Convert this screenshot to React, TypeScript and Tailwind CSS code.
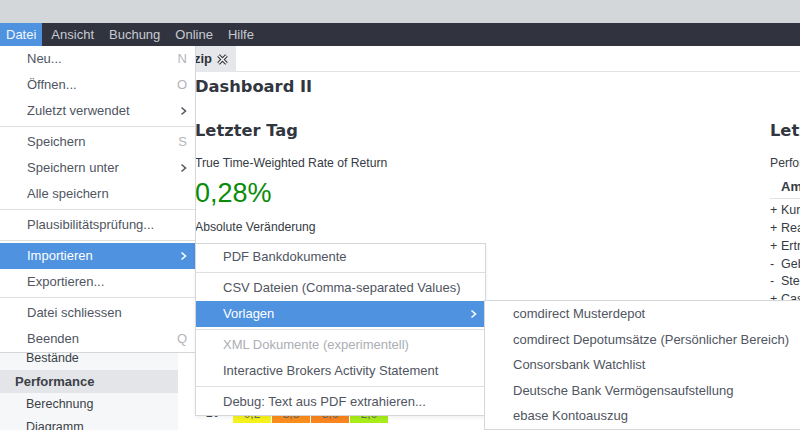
import type { ReactNode } from 'react'

type MenuEntry =
  | { kind: 'sep' }
  | {
      kind: 'item'
      label: string
      shortcut?: string
      sub?: boolean
      active?: boolean
      disabled?: boolean
    }

const sep: MenuEntry = { kind: 'sep' }
const item = (
  label: string,
  extra: Partial<Extract<MenuEntry, { kind: 'item' }>> = {},
): MenuEntry => ({ kind: 'item', label, ...extra })

const FILE_MENU: MenuEntry[] = [
  item('Neu...', { shortcut: 'N' }),
  item('Öffnen...', { shortcut: 'O' }),
  item('Zuletzt verwendet', { sub: true }),
  sep,
  item('Speichern', { shortcut: 'S' }),
  item('Speichern unter', { sub: true }),
  item('Alle speichern'),
  sep,
  item('Plausibilitätsprüfung...'),
  sep,
  item('Importieren', { sub: true, active: true }),
  item('Exportieren...'),
  sep,
  item('Datei schliessen'),
  item('Beenden', { shortcut: 'Q' }),
]

const IMPORT_MENU: MenuEntry[] = [
  item('PDF Bankdokumente'),
  sep,
  item('CSV Dateien (Comma-separated Values)'),
  item('Vorlagen', { sub: true, active: true }),
  sep,
  item('XML Dokumente (experimentell)', { disabled: true }),
  item('Interactive Brokers Activity Statement'),
  sep,
  item('Debug: Text aus PDF extrahieren...'),
]

const TEMPLATES = [
  'comdirect Musterdepot',
  'comdirect Depotumsätze (Persönlicher Bereich)',
  'Consorsbank Watchlist',
  'Deutsche Bank Vermögensaufstellung',
  'ebase Kontoauszug',
]

const TOP_MENU = ['Datei', 'Ansicht', 'Buchung', 'Online', 'Hilfe']

// Sidebar entries above "Bestände" sit under the open menu.
const SIDEBAR: { label: string; group?: boolean; selected?: boolean }[] = [
  { label: 'Wertpapiere', group: true },
  { label: 'Alle Wertpapiere' },
  { label: 'Favoriten' },
  { label: 'Konten', group: true },
  { label: 'Girokonto' },
  { label: 'Tagesgeld' },
  { label: 'Depots', group: true },
  { label: 'Depot' },
  { label: 'Alle Buchungen', group: true },
  { label: 'Berichte', group: true },
  { label: 'Vermögensaufstellung' },
  { label: 'Statement of Assets' },
  { label: 'Zahlungen' },
  { label: 'Bestände' },
  { label: 'Performance', group: true, selected: true },
  { label: 'Berechnung' },
  { label: 'Diagramm' },
]

const CALC_ROWS = [
  ['+', 'Kursgewinne'],
  ['+', 'Realisierte Gewinne'],
  ['+', 'Erträge'],
  ['-', 'Gebühren'],
  ['-', 'Steuern'],
  ['+', 'Cash Währungsgewinne'],
]

const HEAT = [
  { value: '0,2', color: 'bg-[#f5f21c]' },
  { value: '3,5', color: 'bg-[#fb8d1e]' },
  { value: '3,6', color: 'bg-[#fa841e]' },
  { value: '2,0', color: 'bg-[#a8ec1a]' },
]

function Chevron({ light }: { light?: boolean }) {
  return (
    <svg width="7" height="10" viewBox="0 0 7 10" className="shrink-0">
      <polyline
        points="1.5,1.5 5.5,5 1.5,8.5"
        fill="none"
        stroke={light ? '#ffffff' : '#555a63'}
        strokeWidth="1.6"
      />
    </svg>
  )
}

function MenuList({ entries, indent }: { entries: MenuEntry[]; indent: string }): ReactNode {
  return entries.map((entry, index) =>
    entry.kind === 'sep' ? (
      <div key={index} className="py-[2px]">
        <div className="h-px bg-[#dedfe1]" />
      </div>
    ) : (
      <div
        key={index}
        className={`flex h-[26px] items-center justify-between pr-[8px] ${indent} ${
          entry.active
            ? 'bg-[#4f92e0] text-white'
            : entry.disabled
              ? 'text-[#abaeb3]'
              : 'text-[#50555f]'
        }`}
      >
        <span className="whitespace-nowrap">{entry.label}</span>
        {entry.shortcut && <span className="text-[#b3b5b9]">{entry.shortcut}</span>}
        {entry.sub && <Chevron light={entry.active} />}
      </div>
    ),
  )
}

function CloseIcon() {
  return (
    <svg width="11" height="11" viewBox="0 0 11 11" className="shrink-0">
      <path d="M1.5 1.5 L9.5 9.5 M9.5 1.5 L1.5 9.5" stroke="#2e323a" strokeWidth="3.6" />
      <path d="M1.5 1.5 L9.5 9.5 M9.5 1.5 L1.5 9.5" stroke="#ffffff" strokeWidth="1.4" />
    </svg>
  )
}

export default function App() {
  return (
    <div className="relative h-[430px] w-[800px] overflow-hidden bg-white font-['Liberation_Sans',Arial,sans-serif] text-[#363b44]">
      <div className="h-[23px] bg-[#d4d7da]" />
      <nav className="flex h-[23px] gap-[3px] bg-[#31343f] text-[13px]">
        {TOP_MENU.map((label, index) => (
          <span
            key={label}
            className={`flex items-center px-[6px] ${
              index === 0 ? 'bg-[#4f92e0] text-[#f3f6fb]' : 'text-[#c6cad1]'
            }`}
          >
            {label}
          </span>
        ))}
      </nav>

      <div className="flex h-[384px]">
        <aside className="w-[178px] shrink-0 bg-[#f6f7f8] pt-[2px] text-[12.5px] text-[#3b3f47]">
          {SIDEBAR.map((entry) => (
            <div
              key={entry.label}
              className={`flex h-[23px] items-center whitespace-nowrap ${
                entry.group ? 'pl-[15px] text-[13px] font-bold' : 'pl-[26px]'
              } ${entry.selected ? 'bg-[#e4e5e8]' : ''}`}
            >
              {entry.label}
            </div>
          ))}
        </aside>

        <main className="min-w-0 flex-1 overflow-hidden">
          <div className="flex h-[26px] border-b border-[#e1e2e4]">
            <div className="flex h-[26px] w-[58px] items-center justify-end gap-[5px] overflow-hidden bg-[#e6e7ea] pr-[8px]">
              <span className="whitespace-nowrap text-[13px] font-bold text-[#2f333b]">
                Portfolio.zip
              </span>
              <CloseIcon />
            </div>
          </div>

          <div className="flex pl-[17px] pt-[5px]">
            <section className="w-[575px] shrink-0">
              <h1 className="font-['DejaVu_Sans',sans-serif] text-[16.3px] leading-[20px] font-bold text-[#31363f]">
                Dashboard II
              </h1>
              <h2 className="mt-[24px] font-['DejaVu_Sans',sans-serif] text-[16.3px] leading-[20px] font-bold text-[#31363f]">
                Letzter Tag
              </h2>
              <p className="mt-[14px] text-[12.2px] leading-[16px]">
                True Time-Weighted Rate of Return
              </p>
              <p className="mt-[6px] text-[27px] leading-[32px] text-[#0a8c0a]">0,28%</p>
              <p className="mt-[10px] text-[12.2px] leading-[16px]">Absolute Veränderung</p>

              <div className="mt-[168px] flex items-center text-[12px] text-[#3b3f47]">
                <span className="w-[38px] pl-[11px]">20</span>
                <div className="flex gap-px">
                  {HEAT.map((cell) => (
                    <span
                      key={cell.value}
                      className={`flex h-[20px] w-[38px] items-center justify-center pt-[2px] text-[#6a6a6a] ${cell.color}`}
                    >
                      {cell.value}
                    </span>
                  ))}
                </div>
              </div>
            </section>

            <section className="shrink-0 pt-[44px]">
              <h2 className="whitespace-nowrap font-['DejaVu_Sans',sans-serif] text-[16.3px] leading-[20px] font-bold text-[#31363f]">
                Letzter Monat
              </h2>
              <p className="mt-[14px] whitespace-nowrap text-[12.2px] leading-[16px]">
                Performance-Berechnung
              </p>
              <div className="mt-[5px] h-[23px] w-[240px] border-b border-[#dfe0e2] pl-[11px] text-[13px] leading-[22px] font-bold">
                Am Anfang
              </div>
              <div className="pt-[3px] text-[12.5px]">
                {CALC_ROWS.map(([sign, label]) => (
                  <div key={label} className="flex h-[17.7px] items-center whitespace-nowrap">
                    <span className="w-[11px]">{sign}</span>
                    <span>{label}</span>
                  </div>
                ))}
              </div>
            </section>
          </div>
        </main>
      </div>

      {/* Datei menu */}
      <div className="absolute left-0 top-[46px] w-[196px] border-r border-b border-[#d6d7da] bg-white text-[13px]">
        <MenuList entries={FILE_MENU} indent="pl-[27px]" />
      </div>

      {/* Importieren submenu */}
      <div className="absolute left-[195px] top-[243px] w-[291px] border border-[#d6d7da] bg-white text-[13px] shadow-[0_2px_4px_rgba(0,0,0,0.06)]">
        <MenuList entries={IMPORT_MENU} indent="pl-[27px]" />
      </div>

      {/* Vorlagen submenu */}
      <div className="absolute left-[484px] top-[300px] w-[340px] border border-[#d6d7da] bg-white text-[13px]">
        {TEMPLATES.map((label) => (
          <div
            key={label}
            className="flex h-[25.6px] items-center whitespace-nowrap pl-[28px] text-[#50555f]"
          >
            {label}
          </div>
        ))}
      </div>
    </div>
  )
}
